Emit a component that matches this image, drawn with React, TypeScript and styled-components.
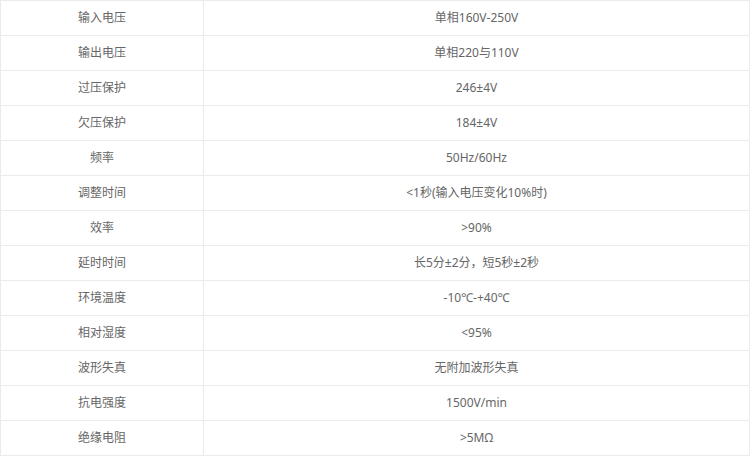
import React from "react";
import styled, { createGlobalStyle } from "styled-components";

const Global = createGlobalStyle`
  html, body { margin: 0; padding: 0; background: #fff; }
  body { font-family: "Noto Sans", "Noto Sans CJK SC", sans-serif; }
`;

const Table = styled.table`
  width: 750px;
  border-collapse: collapse;
  table-layout: fixed;
  font-size: 12px;
  color: #666;
`;

const Row = styled.tr`
  height: 35px;
`;

const Cell = styled.td<{ $w?: number }>`
  border: 1px solid #ebebeb;
  text-align: center;
  vertical-align: middle;
  padding: 0;
  height: 34px;
  line-height: 16px;
  ${(p) => (p.$w ? `width: ${p.$w}px;` : "")}
`;

const rows: [string, string][] = [
  ["输入电压", "单相160V-250V"],
  ["输出电压", "单相220与110V"],
  ["过压保护", "246±4V"],
  ["欠压保护", "184±4V"],
  ["频率", "50Hz/60Hz"],
  ["调整时间", "<1秒(输入电压变化10%时)"],
  ["效率", ">90%"],
  ["延时时间", "长5分±2分，短5秒±2秒"],
  ["环境温度", "-10℃-+40℃"],
  ["相对湿度", "<95%"],
  ["波形失真", "无附加波形失真"],
  ["抗电强度", "1500V/min"],
  ["绝缘电阻", ">5MΩ"],
];

export default function App() {
  return (
    <>
      <Global />
      <Table>
        <tbody>
          {rows.map(([k, v], i) => (
            <Row key={i}>
              <Cell $w={202}>{k}</Cell>
              <Cell>{v}</Cell>
            </Row>
          ))}
        </tbody>
      </Table>
    </>
  );
}
